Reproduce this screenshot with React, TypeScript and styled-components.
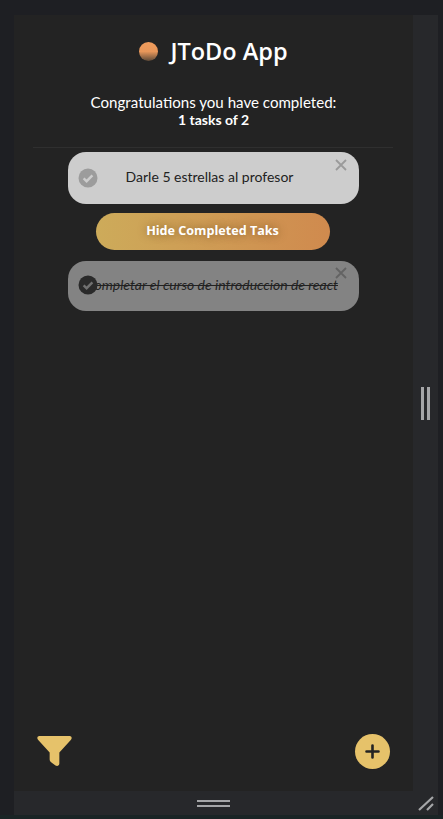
import React from "react";
import styled, { createGlobalStyle } from "styled-components";

const Global = createGlobalStyle`
  html, body { margin: 0; padding: 0; height: 100%; background: #1e1f23; overflow: hidden; }
  #root { height: 100%; }
  * { box-sizing: border-box; }
`;

const Page = styled.div`
  width: 443px;
  height: 819px;
  padding: 15px 5px 0 14px;
  background: #1e1f23;
  display: grid;
  grid-template-columns: 399px 25px;
  grid-template-rows: 776px 24px 4px;
`;

const Panel = styled.main`
  background: #232323;
  display: flex;
  flex-direction: column;
  align-items: center;
  padding-top: 20px;
`;

const SideHandle = styled.div`
  background: #27282b;
  display: flex;
  align-items: center;
  justify-content: center;
  gap: 3px;
  padding-top: 1px;
`;

const Grip = styled.span`
  display: block;
  width: 3px;
  height: 33px;
  background: #a5a6a8;
`;

const BottomHandle = styled.div`
  background: #27282b;
  display: flex;
  flex-direction: column;
  align-items: center;
  justify-content: center;
  gap: 3px;
`;

const GripH = styled.span`
  display: block;
  width: 33px;
  height: 2px;
  background: #a5a6a8;
`;

const Corner = styled.div`
  background: #27282b;
  display: flex;
  align-items: center;
  justify-content: center;
`;

const BottomStrip = styled.div`
  grid-column: 1 / -1;
  margin: 0 -5px 0 -14px;
  background: #1a2425;
`;

const TitleRow = styled.h1`
  margin: 0;
  display: flex;
  align-items: center;
  gap: 12px;
  font-family: "Open Sans", sans-serif;
  font-weight: 600;
  font-size: 23.5px;
  line-height: 33px;
  color: #fff;
`;

const Dot = styled.span`
  width: 19px;
  height: 19px;
  border-radius: 50%;
  background: linear-gradient(180deg, #f09c5c 0%, #e8975a 50%, #5e4a38 100%);
`;

const Summary = styled.p`
  margin: 26px 0 0;
  font-family: "Lato", sans-serif;
  font-size: 15.1px;
  line-height: 17px;
  color: #fff;
  text-align: center;
`;

const Count = styled.strong`
  display: block;
  font-weight: 700;
  font-size: 14px;
`;

const Divider = styled.hr`
  width: 360px;
  height: 1px;
  margin: 19px 2px 4px 0;
  border: 0;
  background: #2f2f2f;
`;

const Task = styled.div<{ $done?: boolean }>`
  width: 291px;
  height: ${(p) => (p.$done ? 50 : 52)}px;
  padding: 0 ${(p) => (p.$done ? 3 : 8)}px 3px 0;
  border-radius: 18px;
  background: ${(p) => (p.$done ? "#838383" : "#cdcdcd")};
  position: relative;
  display: flex;
  align-items: center;
  justify-content: center;
  flex: none;
`;

const TaskText = styled.p<{ $done?: boolean }>`
  margin: 0;
  font-family: "Lato", sans-serif;
  font-size: 14px;
  color: #222;
  white-space: nowrap;
  font-style: ${(p) => (p.$done ? "italic" : "normal")};
  text-decoration: ${(p) => (p.$done ? "line-through" : "none")};
`;

const Check = styled.svg<{ $done?: boolean }>`
  position: absolute;
  left: 10px;
  top: ${(p) => (p.$done ? 14 : 16)}px;
  width: 20px;
  height: 20px;
`;

const Close = styled.svg<{ $done?: boolean }>`
  position: absolute;
  right: 12px;
  top: ${(p) => (p.$done ? 6 : 7)}px;
  width: 12px;
  height: 12px;
`;

const HideButton = styled.button`
  width: 234px;
  height: 37px;
  margin: 9px 2px 11px 0;
  border: 0;
  border-radius: 19px;
  background: linear-gradient(90deg, #cdab5a 0%, #d08a4e 100%);
  color: #fff;
  font-family: "Open Sans", sans-serif;
  font-weight: 700;
  font-size: 12.6px;
  text-shadow: 0 0 8px rgba(90, 60, 20, 0.6);
  padding: 0 0 3px;
`;

const Actions = styled.div`
  margin-top: auto;
  width: 100%;
  padding: 0 23px 22px 22px;
  display: flex;
  justify-content: space-between;
  align-items: center;
`;

const FilterIcon = styled.svg`
  margin-top: -1px;
`;

const AddButton = styled.button`
  width: 35px;
  height: 35px;
  border: 0;
  border-radius: 50%;
  padding: 0;
  background: #e6c26a;
  display: flex;
  align-items: center;
  justify-content: center;
`;

const CheckIcon = ({ done }: { done?: boolean }) => (
  <Check $done={done} viewBox="0 0 20 20">
    <circle cx="10" cy="10" r="9.5" fill={done ? "#2a2a2a" : "#9c9c9c"} />
    <path d="M5.6 10.3 8.6 13.2 14.4 7.4" fill="none" stroke={done ? "#707070" : "#cdcdcd"} strokeWidth="2.4" />
  </Check>
);

const CloseIcon = ({ done }: { done?: boolean }) => (
  <Close $done={done} viewBox="0 0 12 12">
    <path d="M1 1 11 11M11 1 1 11" stroke={done ? "#636363" : "#9a9a9a"} strokeWidth="1.8" fill="none" />
  </Close>
);

export default function App() {
  return (
    <Page>
      <Global />
      <Panel>
        <TitleRow>
          <Dot />
          JToDo App
        </TitleRow>
        <Summary>
          Congratulations you have completed:
          <Count>1 tasks of 2</Count>
        </Summary>
        <Divider />
        <Task>
          <CheckIcon />
          <TaskText>Darle 5 estrellas al profesor</TaskText>
          <CloseIcon />
        </Task>
        <HideButton>Hide Completed Taks</HideButton>
        <Task $done>
          <CheckIcon done />
          <TaskText $done>Completar el curso de introduccion de react</TaskText>
          <CloseIcon done />
        </Task>
        <Actions>
          <FilterIcon width="37" height="32" viewBox="0 0 37 33">
            <path
              d="M3 1H34C36 1 37 3 35.5 4.800L23.500 18V29.500C23.500 32 21 32.500 19.500 31.500L15 28C13.800 27 13.500 26 13.500 25V18L1.500 4.800C0 3 1 1 3 1Z"
              fill="#e6c26a"
            />
          </FilterIcon>
          <AddButton aria-label="Add">
            <svg width="17" height="17" viewBox="0 0 17 17">
              <path d="M8.500 2.500V14.500M2.500 8.500H14.500" stroke="#232323" strokeWidth="2.600" strokeLinecap="round" />
            </svg>
          </AddButton>
        </Actions>
      </Panel>
      <SideHandle>
        <Grip />
        <Grip />
      </SideHandle>
      <BottomHandle>
        <GripH />
        <GripH />
      </BottomHandle>
      <Corner>
        <svg width="16" height="16" viewBox="0 0 16 16">
          <path d="M1 15 15 2M9 15 15 9" stroke="#a5a6a8" strokeWidth="2.200" />
        </svg>
      </Corner>
      <BottomStrip />
    </Page>
  );
}
